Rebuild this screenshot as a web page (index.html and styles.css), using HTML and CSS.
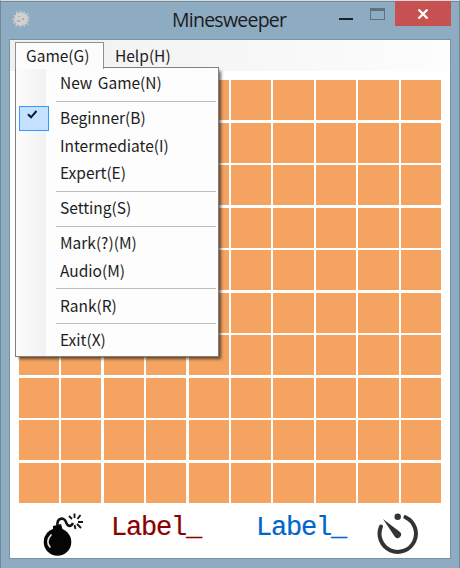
FILE: index.html
```html
<!DOCTYPE html>
<html lang="en">
<head>
<meta charset="utf-8">
<title>Minesweeper</title>
<link rel="stylesheet" href="styles.css">
</head>
<body>
<div class="window">
  <header class="titlebar">
    <svg class="app-icon" width="18" height="18" viewBox="0 0 18 18"><path d="M9 0l1 3 3-2v3l4-1-2 3 3 1-2 2 2 2-3 1 2 3-4-1v3l-3-2-2 3-1-3-4 2 1-4-3 1 1-3-2-2 3-1-2-3 3 0 0-4 3 2z" fill="#c4c6c8"/><circle cx="9" cy="9" r="6.2" fill="#d0d0d0"/><path d="M5 10h3v2H5zM10 8h2v2h-2zM6 6h2v1H6z" fill="#b0b0b0"/></svg>
    <h1 class="title">Minesweeper</h1>
    <div class="controls">
      <span class="minimize"></span>
      <span class="maximize"></span>
      <span class="close"><svg width="12" height="10" viewBox="0 0 12 10"><path d="M1.5 .5l9 9M10.500 .5l-9 9" stroke="#fff" stroke-width="2.300"/></svg></span>
    </div>
  </header>
  <main class="client">
    <nav class="menubar">
      <div class="tab open">Game(G)</div>
      <div class="tab">Help(H)</div>
      <div class="menu">
        <div class="item">New Game(N)</div>
        <hr>
        <div class="item"><span class="check"><svg width="11" height="9" viewBox="0 0 11 9"><path d="M1 4.300l3 3L9.500 1" fill="none" stroke="#10182c" stroke-width="2"/></svg></span>Beginner(B)</div>
        <div class="item">Intermediate(I)</div>
        <div class="item">Expert(E)</div>
        <hr>
        <div class="item">Setting(S)</div>
        <hr>
        <div class="item">Mark(?)(M)</div>
        <div class="item">Audio(M)</div>
        <hr>
        <div class="item">Rank(R)</div>
        <hr>
        <div class="item">Exit(X)</div>
      </div>
    </nav>
    <div class="board" id="board"></div>
    <footer class="status">
      <svg class="bomb" width="40" height="44" viewBox="0 0 40 44"><circle cx="14.500" cy="29" r="13.800" fill="#050505"/><path d="M10 13l8-2 2 7-10 1z" fill="#050505"/><path d="M14.500 13c-1-9 7-9 8.500-4s5 5 7 1" fill="none" stroke="#111" stroke-width="2.600"/><path d="M8 22c-4 4-4 9-1 12" fill="none" stroke="#e8e8e8" stroke-width="1.700" stroke-linecap="round"/><path d="M31.500 5V.5M34.500 6l3-4M35 9h5M34 11l4 4M31.500 12l1 4M29 6l-3-3" stroke="#181818" stroke-width="1.900"/></svg>
      <span class="label mines">Label_</span>
      <span class="label time">Label_</span>
      <svg class="timer" width="42" height="44" viewBox="0 0 42 44"><path d="M4 13.500A18.200 18.200 0 1 0 28.500 4.200" fill="none" stroke="#333" stroke-width="4" stroke-linecap="round"/><circle cx="20.700" cy="3.700" r="3.200" fill="#333"/><path d="M6 6l17 13a3.500 3.500 0 0 1-5 5z" fill="#333"/></svg>
    </footer>
  </main>
</div>
<script>
  const board = document.getElementById("board");
  for (let i = 0; i < 100; i++) board.appendChild(document.createElement("i"));
</script>
</body>
</html>
```
FILE: styles.css
```css
* { box-sizing: border-box; }
body {
  margin: 0;
  overflow: hidden;
  font-family: "Noto Sans CJK SC", "Noto Sans", sans-serif;
  color: #1c1c22;
}
.window {
  width: 460px;
  height: 568px;
  background: #8dacc2;
  border-top: 1px solid #dbdbdb;
  border-left: 1px solid #71899b;
  border-right: 1px solid #71899b;
  padding: 0 8px 9px;
  display: flex;
  flex-direction: column;
  box-shadow: inset 0 1px #71899b;
}
.titlebar {
  height: 38px;
  flex: none;
  display: flex;
  align-items: flex-start;
}
.app-icon { margin: 9px 0 0 3px; }
.title {
  font: 400 19.500px/36px "Open Sans", sans-serif;
  letter-spacing: -.750px;
  margin: 1px 0 0 142px;
  width: 116px;
  white-space: nowrap;
}
.controls { display: flex; margin-left: auto; }
.minimize { width: 14px; height: 2px; background: #202024; margin: 17px 17px 0 0; }
.maximize { width: 15px; height: 12px; border: 1px solid #5f7180; border-top-width: 3px; margin: 7px 10px 0 0; }
.close { width: 56px; height: 25px; background: #c75050; display: flex; align-items: center; justify-content: center; }
.client {
  flex: 1;
  background: #fff;
  border: 1px solid #7891a3;
  display: flex;
  flex-direction: column;
}
.menubar {
  position: relative;
  height: 31px;
  flex: none;
  padding: 2px 0 0 5px;
  display: flex;
  background: linear-gradient(90deg, #f0f0f0, #fdfdfd);
  font-size: 15.500px;
  word-spacing: 2px;
}
.tab { height: 27px; line-height: 24px; padding-left: 10px; width: 89px; white-space: nowrap; border: 1px solid transparent; }
.tab.open { position: relative; z-index: 2; background: #fcfcfc; border-color: #909090; border-bottom: 0; }
.menu {
  position: absolute;
  z-index: 1;
  left: 5px;
  top: 27px;
  width: 204px;
  height: 290px;
  padding: 2px 1px;
  border: 1px solid #808080;
  background: linear-gradient(90deg, #fcfcfc, #f1f1f1 30px, #fdfdfd 30px);
  box-shadow: 3px 3px 3px -1px rgba(0, 0, 0, .6);
}
.item { position: relative; height: 27.700px; line-height: 25px; padding-left: 43px; white-space: nowrap; }
.menu hr { height: 1px; margin: 3px 1px 3.200px 39px; border: 0; background: #bdbdbd; }
.check {
  position: absolute;
  left: 2px;
  top: 1px;
  width: 30px;
  height: 25px;
  border: 1px solid #3399ff;
  background: #c4e1ff;
}
.check svg { position: absolute; left: 7px; top: 3px; }
.board {
  width: 422.500px;
  height: 423px;
  margin: 9px 0 0 8.600px;
  flex: none;
  display: grid;
  grid-template: repeat(10, 1fr) / repeat(10, 1fr);
  gap: 2.300px;
}
.board i { background: #f4a460; }
.status { display: flex; margin-top: 10px; padding-left: 33px; }
.label {
  font: 27px/30px "Liberation Mono", monospace;
  letter-spacing: -1.200px;
  -webkit-text-stroke: .2px;
  width: 90px;
}
.mines { color: #8b0000; margin-left: 28px; }
.time { color: #0066cc; margin-left: 55px; }
.timer { margin-left: 31px; }
```
